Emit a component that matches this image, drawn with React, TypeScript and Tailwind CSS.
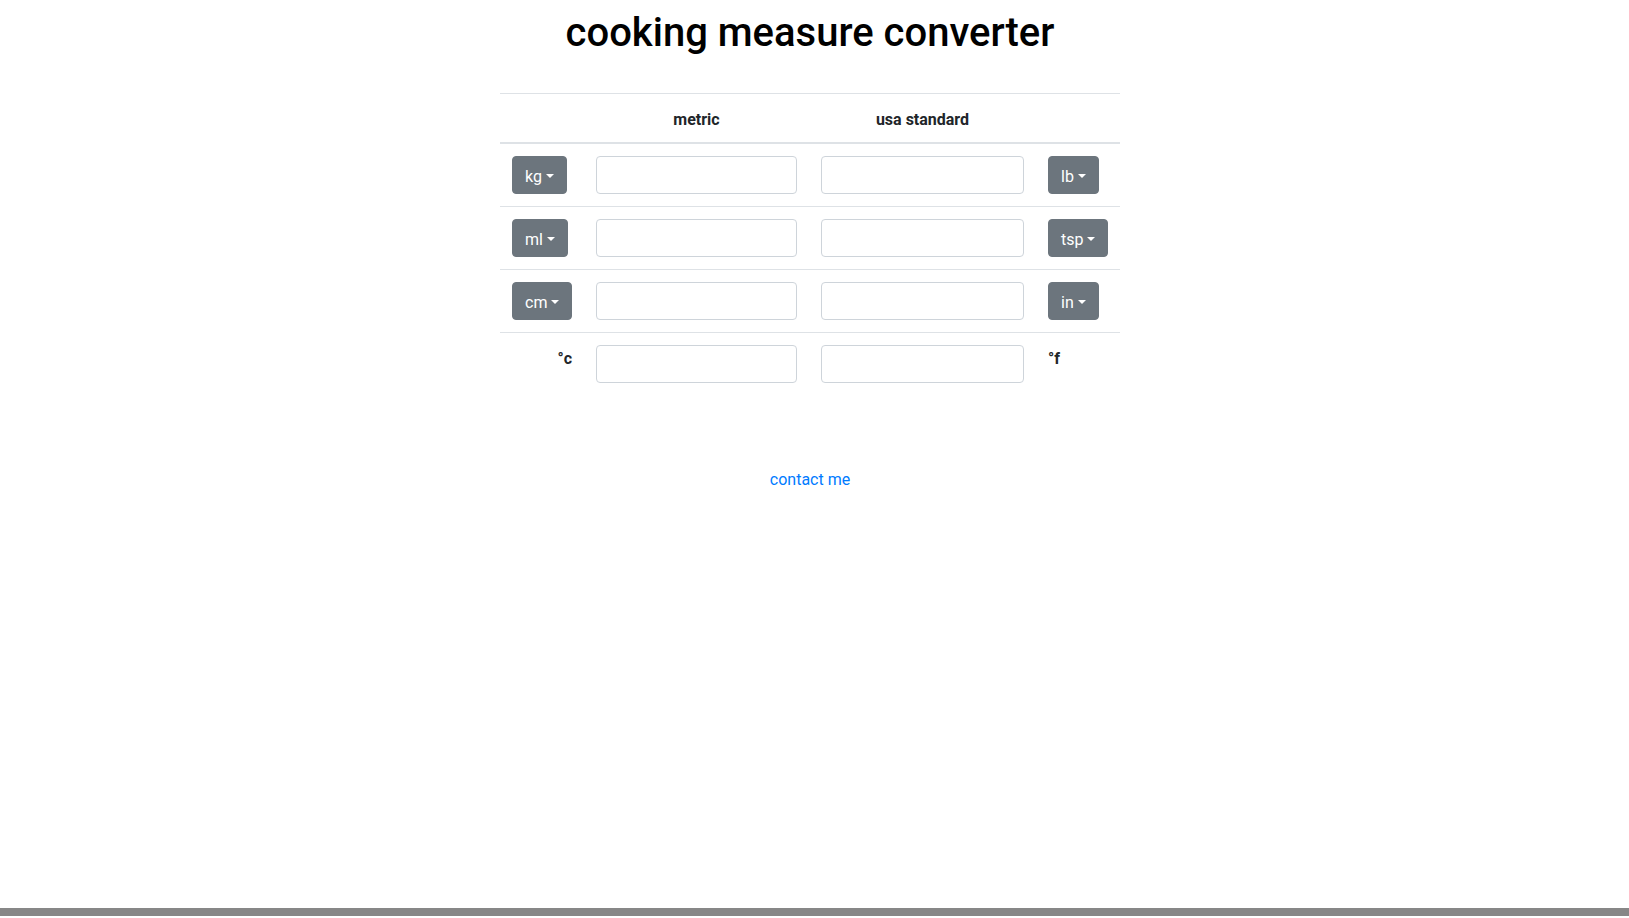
import React from 'react';

const rows = [
  { metric: 'kg', usa: 'lb' },
  { metric: 'ml', usa: 'tsp' },
  { metric: 'cm', usa: 'in' },
];

const UnitButton: React.FC<{ label: string }> = ({ label }) => (
  <button
    type="button"
    className="inline-flex h-[38px] items-center rounded border border-[#6c757d] bg-[#6c757d] px-3 pt-[3px] text-base leading-6 text-white"
  >
    {label}
    <span className="mb-[2px] ml-[4px] inline-block h-0 w-0 border-x-[4.8px] border-t-[4.8px] border-b-0 border-x-transparent border-t-white" />
  </button>
);

const Field: React.FC = () => (
  <input
    type="text"
    className="block h-[38px] w-full rounded border border-[#ced4da] bg-white px-3 text-base text-[#495057] outline-none"
  />
);

const App: React.FC = () => {
  return (
    <div className="flex h-[918px] flex-col bg-white font-['Roboto',sans-serif] text-[#212529]">
      <div className="pr-[9px]">
        <div className="mx-auto w-[620px]">
          <h1 className="mt-[9px] text-center text-[40px] font-medium leading-[48px] text-black">
            cooking measure converter
          </h1>

          <div className="mt-[36px]">
            <div className="grid grid-cols-[84px_225px_227px_84px] border-t border-b-2 border-[#dee2e6] text-base font-bold leading-6">
              <div className="p-3" />
              <div className="px-3 pt-[14px] pb-[10px] text-center">metric</div>
              <div className="px-3 pt-[14px] pb-[10px] text-center">usa standard</div>
              <div className="p-3" />
            </div>

            {rows.map((row, i) => (
              <div
                key={row.metric}
                className={
                  i === 0
                    ? 'grid grid-cols-[84px_225px_227px_84px]'
                    : 'grid grid-cols-[84px_225px_227px_84px] border-t border-[#dee2e6]'
                }
              >
                <div className="p-3">
                  <UnitButton label={row.metric} />
                </div>
                <div className="p-3">
                  <Field />
                </div>
                <div className="p-3">
                  <Field />
                </div>
                <div className="p-3">
                  <UnitButton label={row.usa} />
                </div>
              </div>
            ))}

            <div className="grid grid-cols-[84px_225px_227px_84px] border-t border-[#dee2e6] leading-6">
              <div className="px-3 pt-[14px] text-right font-bold">°c</div>
              <div className="p-3">
                <Field />
              </div>
              <div className="p-3">
                <Field />
              </div>
              <div className="px-3 pt-[14px] font-bold">°f</div>
            </div>
          </div>

          <div className="mt-[73px] text-center leading-6">
            <a href="#" className="text-[#007bff]">
              contact me
            </a>
          </div>
        </div>
      </div>

      <div className="flex-1" />
      <div className="h-2 bg-[#878787]" />
      <div className="h-[2px]" />
    </div>
  );
};

export default App;
